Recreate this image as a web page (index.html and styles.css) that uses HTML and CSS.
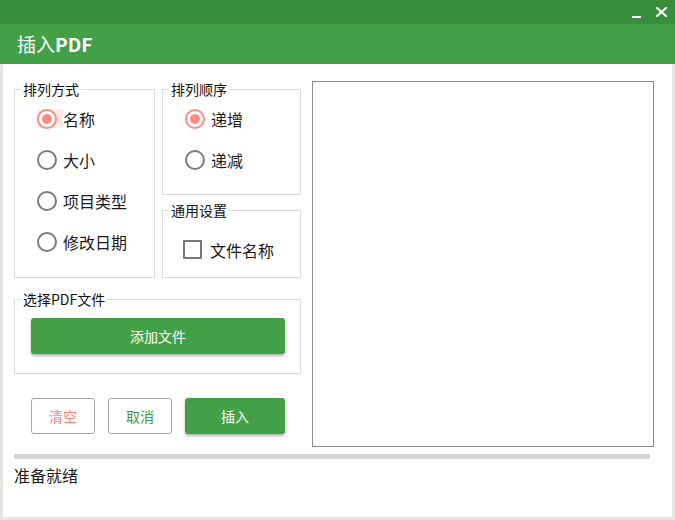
FILE: index.html
```html
<!DOCTYPE html>
<html lang="zh-CN">
<head>
<meta charset="utf-8">
<title>插入PDF</title>
<link rel="stylesheet" href="styles.css">
</head>
<body>
<div class="window">
  <div class="titlebar">
    <svg class="ico-min" width="9" height="3" viewBox="0 0 9 3"><rect x="0" y="0" width="9" height="2" fill="#fff"/></svg>
    <svg class="ico-close" width="11" height="10" viewBox="0 0 11 10"><path d="M1 1 L10 9 M10 1 L1 9" stroke="#fff" stroke-width="2.2" stroke-linecap="square"/></svg>
  </div>
  <div class="header">插入<span class="bold">PDF</span></div>
  <div class="body">
    <div class="content">
      <div class="left">
        <div class="toprow">
          <div class="group g-sort">
            <div class="legend">排列方式</div>
            <div class="list">
              <div class="row"><span class="radio-wrap hl"><span class="radio on"></span></span><span class="label">名称</span></div>
              <div class="row"><span class="radio-wrap"><span class="radio"></span></span><span class="label">大小</span></div>
              <div class="row"><span class="radio-wrap"><span class="radio"></span></span><span class="label">项目类型</span></div>
              <div class="row"><span class="radio-wrap"><span class="radio"></span></span><span class="label">修改日期</span></div>
            </div>
          </div>
          <div class="col">
            <div class="group g-order">
              <div class="legend">排列顺序</div>
              <div class="list">
                <div class="row"><span class="radio-wrap"><span class="radio on"></span></span><span class="label">递增</span></div>
                <div class="row"><span class="radio-wrap"><span class="radio"></span></span><span class="label">递减</span></div>
              </div>
            </div>
            <div class="group g-common">
              <div class="legend">通用设置</div>
              <div class="list list-check">
                <div class="row"><span class="check"></span><span class="label">文件名称</span></div>
              </div>
            </div>
          </div>
        </div>
        <div class="group g-file">
          <div class="legend">选择PDF文件</div>
          <button class="btn btn-green btn-add">添加文件</button>
        </div>
        <div class="actions">
          <button class="btn btn-outline btn-clear">清空</button>
          <button class="btn btn-outline btn-cancel">取消</button>
          <button class="btn btn-green btn-insert">插入</button>
        </div>
      </div>
      <div class="listbox"></div>
    </div>
    <div class="progress"></div>
    <div class="status">准备就绪</div>
  </div>
</div>
</body>
</html>
```
FILE: styles.css
```css
* { box-sizing: border-box; }
html, body { margin: 0; padding: 0; background: #fff; }
body {
  font-family: "Noto Sans CJK SC", "Microsoft YaHei", sans-serif;
  color: #1a1a1a;
}
.window {
  width: 675px;
  height: 520px;
  display: flex;
  flex-direction: column;
  background: #fff;
}
.titlebar {
  height: 24px;
  background: #388e3c;
  display: flex;
  justify-content: flex-end;
  align-items: center;
  padding-right: 8px;
  gap: 15px;
}
.ico-min { margin-top: 10px; }
.ico-close { margin-top: -1px; }
.header {
  height: 40px;
  background: #43a047;
  color: #fff;
  font-size: 19px;
  line-height: 40px;
  padding-left: 17px;
}
.header .bold { font-weight: 700; }
.body {
  flex: 1;
  border: 3px solid #e6e6e6;
  border-top: 0;
  padding: 17px 17px 0 11px;
}
.content {
  display: flex;
  gap: 11px;
  align-items: flex-start;
}
.left {
  width: 287px;
  padding-top: 8px;
  display: flex;
  flex-direction: column;
}
.toprow {
  display: flex;
  gap: 7px;
}
.col {
  width: 139px;
  display: flex;
  flex-direction: column;
  gap: 15px;
}
.group {
  border: 1px solid #dcdcdc;
}
.g-sort { width: 141px; }
.g-order { height: 106px; }
.g-common { height: 68px; }
.legend {
  display: table;
  margin: -9px 0 0 6px;
  padding: 0 2px;
  background: #fff;
  font-size: 14px;
  line-height: 16px;
  color: #111;
}
.list { margin-top: 1px; padding-left: 22px; }
.list-check { margin-top: 11px; padding-left: 20px; }
.row {
  height: 41px;
  display: flex;
  align-items: center;
}
.radio-wrap {
  display: flex;
  align-items: center;
  width: 26px;
  height: 19px;
}
.radio-wrap.hl { background: #fde9e8; }
.radio {
  width: 20px;
  height: 20px;
  border: 2px solid #7a7a7a;
  border-radius: 50%;
  display: flex;
  align-items: center;
  justify-content: center;
  background: #fff;
}
.radio.on {
  border-color: #ff8a80;
}
.radio.on::after {
  content: "";
  width: 10px;
  height: 10px;
  border-radius: 50%;
  background: #ff8a80;
}
.check {
  width: 19px;
  height: 19px;
  border: 2px solid #777;
  border-radius: 1px;
  margin-right: 8px;
}
.label {
  font-size: 16px;
  line-height: 20px;
  color: #1a1a1a;
}
.g-file { margin-top: 21px; height: 75px; }
.btn {
  font-family: "Noto Sans CJK SC", "Microsoft YaHei", sans-serif;
  font-size: 14px;
  height: 36px;
  border-radius: 3px;
  padding: 0;
  cursor: pointer;
}
.btn-green {
  background: #43a047;
  color: #fff;
  border: 0;
  box-shadow: 0 2px 3px rgba(0, 0, 0, 0.3);
}
.btn-add {
  display: block;
  width: 254px;
  margin: 11px 0 0 16px;
}
.actions {
  margin-top: 24px;
  padding-left: 17px;
  display: flex;
  gap: 13px;
}
.btn-outline {
  width: 64px;
  background: #fff;
  border: 1px solid #a6a6a6;
}
.btn-clear { color: #ff7f73; }
.btn-cancel { color: #3d9a42; }
.btn-insert { width: 100px; }
.listbox {
  width: 342px;
  height: 366px;
  border: 1px solid #8a8a90;
  background: #fff;
}
.progress {
  margin-top: 7px;
  width: 636px;
  height: 5px;
  background: #d6d6d6;
}
.status {
  margin-top: 6px;
  font-size: 16px;
  line-height: 20px;
  color: #1a1a1a;
}
```
